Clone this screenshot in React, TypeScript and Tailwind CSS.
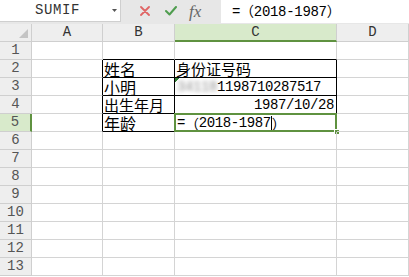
import React from "react";

const COLS = ["A", "B", "C", "D"];
const ROWS = Array.from({ length: 13 }, (_, i) => i + 1);

const MONO = "font-['Liberation_Mono','Noto_Sans_CJK_SC',monospace]";
const CJK = "font-['Noto_Sans_CJK_SC','Liberation_Sans',sans-serif]";

function inTable(r: number, c: number) {
  return r >= 2 && r <= 5 && (c === 1 || c === 2);
}

function Cell({ r, c }: { r: number; c: number }) {
  const rightBlack = inTable(r, c) || inTable(r, c + 1);
  const bottomBlack = inTable(r, c) || inTable(r + 1, c);
  const cls = [
    "relative h-[18px] border-r border-b flex items-center",
    rightBlack ? "border-r-black" : "border-r-[#d4d4d4]",
    bottomBlack ? "border-b-black" : "border-b-[#d4d4d4]",
  ].join(" ");

  let content: React.ReactNode = null;
  if (c === 1 && r === 2) content = <span className={`${CJK} pl-[1px] text-[16px] leading-[16px] text-black`}>姓名</span>;
  if (c === 1 && r === 3) content = <span className={`${CJK} pl-[1px] text-[16px] leading-[16px] text-black`}>小明</span>;
  if (c === 1 && r === 4) content = <span className={`${CJK} pl-[1px] text-[15px] leading-[16px] text-black whitespace-nowrap`}>出生年月</span>;
  if (c === 1 && r === 5) content = <span className={`${CJK} pl-[1px] text-[16px] leading-[16px] text-black`}>年龄</span>;
  if (c === 2 && r === 2) content = <span className={`${CJK} pl-[1px] text-[15px] leading-[16px] text-black`}>身份证号码</span>;
  if (c === 2 && r === 3)
    content = (
      <>
        <div className="absolute left-0 top-0 flex flex-col">
          <div className="w-[4px] h-[1px] bg-[#2f7d32]" />
          <div className="w-[3px] h-[1px] bg-[#2f7d32]" />
          <div className="w-[2px] h-[1px] bg-[#2f7d32]" />
          <div className="w-[1px] h-[1px] bg-[#2f7d32]" />
        </div>
        <span className={`${MONO} pl-[2px] text-[14px] tracking-[-0.4px] leading-none text-black whitespace-nowrap`}>
          <span className="text-transparent [text-shadow:0_0_4px_#8f8f8f]">34118</span>
          <span>1198710287517</span>
        </span>
      </>
    );
  if (c === 2 && r === 4)
    content = (
      <span className={`${MONO} ml-auto pr-[2px] text-[14px] tracking-[-0.4px] leading-none text-black`}>1987/10/28</span>
    );
  if (c === 2 && r === 5)
    content = (
      <>
        <span className={`${MONO} pl-[2px] text-[14px] tracking-[-0.4px] leading-none text-black whitespace-nowrap flex items-center`}>
          <span>=</span>
          <span className={CJK}>（</span>
          <span>2018-1987</span>
          <span className="inline-block w-[1px] h-[14px] bg-black" />
          <span className={CJK}>）</span>
        </span>
        <div className="absolute left-[-1px] top-[-1px] right-[-1px] bottom-[-1px] border-2 border-[#5f9240]" />
        <div className="absolute right-[-4px] bottom-[-4px] w-[6px] h-[6px] bg-[#5f9240] border border-white" />
      </>
    );

  return <div className={cls}>{content}</div>;
}

export default function App() {
  return (
    <div className="w-[409px] h-[277px] overflow-hidden bg-white select-none">
      <div className="h-[24px] bg-[#e7e7e7] flex items-start">
        <div className="w-[121px] h-[22px] bg-white border-r border-b border-[#cfcfcf] flex items-center justify-between pl-[35px] pr-[3px]">
          <span className={`${MONO} text-[14px] tracking-[0.6px] text-[#333]`}>SUMIF</span>
          <svg width="5" height="3" viewBox="0 0 5 3">
            <path d="M0 0 L5 0 L2.5 3 Z" fill="#555" />
          </svg>
        </div>
        <div className="w-[100px] h-[22px] flex items-center">
          <svg className="ml-[19px]" width="10" height="10" viewBox="0 0 10 10">
            <path d="M1 1 L9 9 M9 1 L1 9" stroke="#e06565" strokeWidth="1.8" strokeLinecap="round" />
          </svg>
          <svg className="ml-[15px]" width="12" height="10" viewBox="0 0 12 10">
            <path d="M1 5 L4.5 8.5 L11 1" stroke="#4f9d4f" strokeWidth="2" fill="none" strokeLinecap="round" strokeLinejoin="round" />
          </svg>
          <span className="ml-[12px] font-['Liberation_Serif',serif] italic text-[17px] leading-none text-[#666]">fx</span>
        </div>
        <div className="flex-1 h-[23px] bg-white flex items-center">
          <span className={`${MONO} ml-[11px] text-[14px] tracking-[-0.3px] text-black whitespace-nowrap`}>
            =<span className={CJK}>（</span>2018-1987<span className={CJK}>）</span>
          </span>
        </div>
      </div>

      <div className="grid grid-cols-[32px_71px_72px_162px_72px]">
        <div className="h-[18px] bg-[#eeeeee] border-r border-b border-[#cfcfcf] flex items-end justify-end p-[3px]">
          <svg width="9" height="9" viewBox="0 0 9 9">
            <path d="M9 0 L9 9 L0 9 Z" fill="#c4c4c4" />
          </svg>
        </div>
        {COLS.map((c) => (
          <div
            key={c}
            className={
              c === "C"
                ? `${MONO} h-[18px] bg-[#d8eacb] border-r border-r-[#cfcfcf] border-b-2 border-b-[#5f9240] flex items-center justify-center text-[14px] text-[#333]`
                : `${MONO} h-[18px] bg-[#eeeeee] border-r border-b border-[#cfcfcf] flex items-center justify-center text-[14px] text-[#333]`
            }
          >
            {c}
          </div>
        ))}

        {ROWS.map((r) => (
          <React.Fragment key={r}>
            <div
              className={
                r === 5
                  ? `${MONO} h-[18px] bg-[#d8eacb] border-r-2 border-r-[#5f9240] border-b border-b-[#cfcfcf] flex items-center justify-center text-[14px] text-[#555]`
                  : `${MONO} h-[18px] bg-[#eeeeee] border-r border-b border-[#cfcfcf] flex items-center justify-center text-[14px] text-[#555]`
              }
            >
              {r}
            </div>
            {COLS.map((_, ci) => (
              <Cell key={ci} r={r} c={ci} />
            ))}
          </React.Fragment>
        ))}
      </div>
    </div>
  );
}
